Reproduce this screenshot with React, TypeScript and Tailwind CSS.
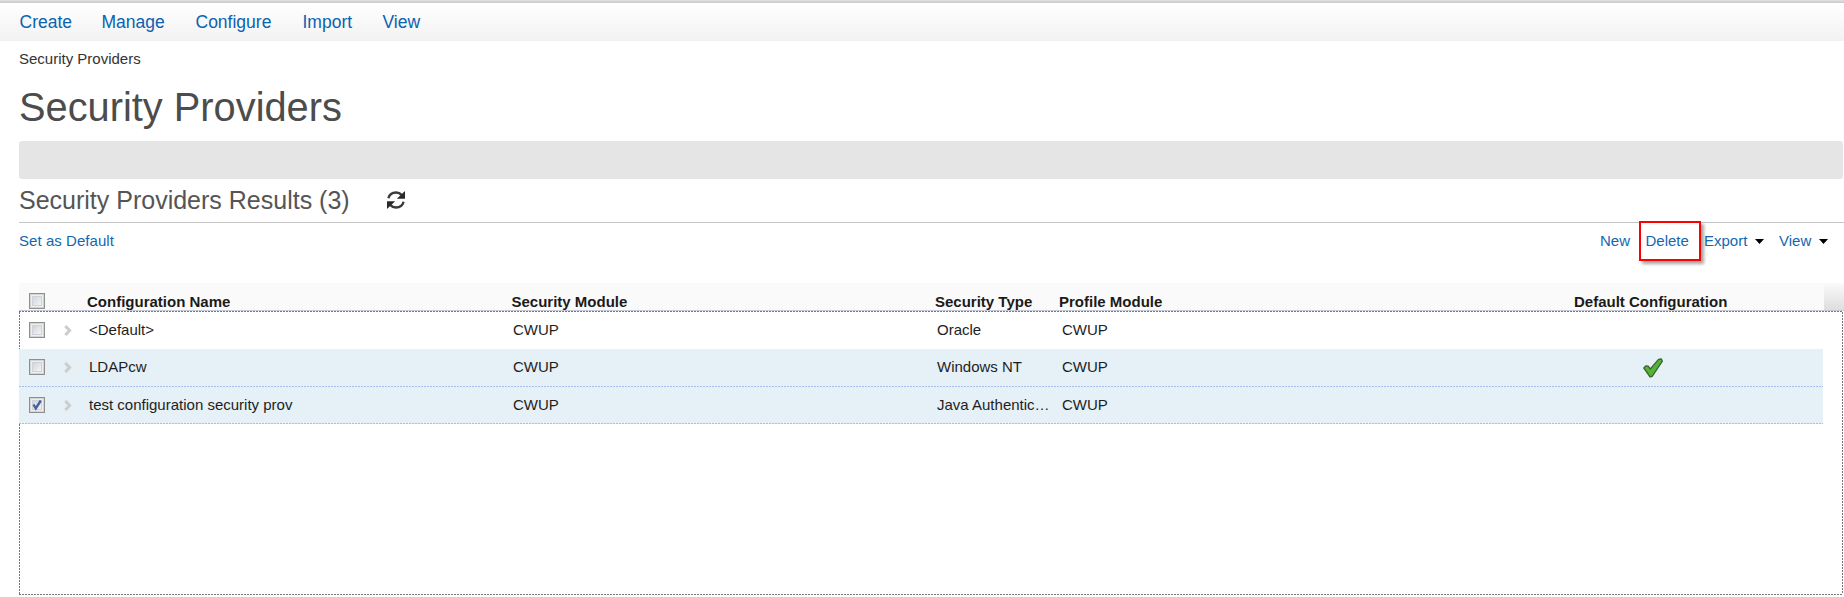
import React from "react";

const nav = [
  { label: "Create", cls: "w-[82px]" },
  { label: "Manage", cls: "w-[94px]" },
  { label: "Configure", cls: "w-[107px]" },
  { label: "Import", cls: "w-[80px]" },
  { label: "View", cls: "" },
];

const rows = [
  { name: "<Default>", type: "Oracle", checked: false, isDefault: false, cls: "h-[37px]", line: false },
  { name: "LDAPcw", type: "Windows NT", checked: false, isDefault: true, cls: "h-[37px] bg-[#e5f0f7]", line: true },
  { name: "test configuration security prov", type: "Java Authentic…", checked: true, isDefault: false, cls: "h-[36px] bg-[#e5f0f7]", line: true },
];

const grid = "grid grid-cols-[68px_424px_424px_125px_534px_1fr]";
const dashH = "h-px shrink-0 bg-[repeating-linear-gradient(90deg,#777_0_2px,#fff_2px_3px)]";
const dashV = "w-px shrink-0 bg-[repeating-linear-gradient(180deg,#777_0_2px,#fff_2px_3px)]";
const rowLine = "h-px w-[1804px] shrink-0 bg-[repeating-linear-gradient(90deg,#a9bdea_0_2px,#e5f0f7_2px_3px)]";

function Checkbox({ checked }: { checked?: boolean }) {
  return (
    <svg width="16" height="16" viewBox="0 0 16 16" className="block shrink-0">
      <defs>
        <linearGradient id="boxFill" x1="0" y1="0" x2="1" y2="1">
          <stop offset="0" stopColor="#ced2da" />
          <stop offset="1" stopColor="#f6f6f6" />
        </linearGradient>
      </defs>
      <rect x="0.5" y="0.5" width="15" height="15" fill="#eeeeee" stroke="#8e8f8f" />
      <rect x="1.5" y="1.5" width="13" height="13" fill="none" stroke="#c9c9c9" strokeOpacity="0.7" />
      <rect x="3.5" y="3.5" width="9" height="9" fill="url(#boxFill)" stroke="#cfd2d9" />
      {checked && <path d="M4.5 7.5 6.8 11.5 11.8 3.5" fill="none" stroke="#4a5f9f" strokeWidth="2.4" />}
    </svg>
  );
}

function Chevron() {
  return (
    <svg width="8" height="11" viewBox="0 0 8 11" className="block">
      <path d="M1.3 1 5.6 5.5 1.3 10" fill="none" stroke="#cdcdcd" strokeWidth="3" />
    </svg>
  );
}

function Refresh() {
  return (
    <svg width="18" height="18" viewBox="0 0 18 18" className="block">
      <path d="M1.4 7.2C2.4 3.4 5.6 1.5 9 1.5c2.6 0 4.4 1 5.8 2.6" fill="none" stroke="#3a3a3a" strokeWidth="2.4" />
      <path d="M18 0v7.8H9.8Z" fill="#2a2a2a" />
      <path d="M16.6 10.8C15.6 14.6 12.4 16.5 9 16.5c-2.6 0-4.4-1-5.8-2.6" fill="none" stroke="#3a3a3a" strokeWidth="2.4" />
      <path d="M0 18v-7.8H8.2Z" fill="#2a2a2a" />
    </svg>
  );
}

function Caret() {
  return (
    <svg width="9" height="5" viewBox="0 0 9 5" className="block">
      <path d="M0 0H9L4.5 5Z" fill="#000" />
    </svg>
  );
}

function GreenCheck() {
  return (
    <svg width="20" height="20" viewBox="0 0 20 20" className="block">
      <path d="M.8 10 3 7.8 5.2 8.2 7.3 11 15.5 1.4 18.4 1 19.4 3.2 9.2 18.4 7.2 19Z" fill="#55b335" stroke="#3d6631" strokeWidth="1.3" strokeLinejoin="round" />
    </svg>
  );
}

export default function App() {
  return (
    <div className="h-[597px] w-[1844px] overflow-hidden bg-white font-['Liberation_Sans',Arial,sans-serif] text-[15px] leading-[18px] text-[#1e1e1e]">
      <div className="h-[3px] bg-linear-to-b from-[#e2e2e2] to-[#c8c8c8]" />
      <nav className="flex h-[38px] bg-linear-to-b from-white to-[#f2f2f2] pt-[8px] pl-[19.5px] text-[17.5px] leading-[22px] text-[#0b62b0]">
        {nav.map((n) => (
          <a key={n.label} className={n.cls}>{n.label}</a>
        ))}
      </nav>
      <main className="pl-[19px]">
        <div className="h-[39px] pt-[9px] text-[#333]">Security Providers</div>
        <h1 className="h-[61px] pt-[4px] text-[39.8px] leading-[46px] text-[#4c4c4c]">Security Providers</h1>
        <div className="h-[38px] w-[1824px] rounded-[3px] bg-[#e5e5e5]" />
        <div className="flex h-[43px] items-start pt-[7px] text-[25px] leading-[28px] text-[#555]">
          <h2 className="w-[368px]">Security Providers Results (3)</h2>
          <span className="pt-[5px]"><Refresh /></span>
        </div>
        <div className="h-px bg-[#c6c6c6]" />
        <div className="flex h-[60px] items-start text-[#1267b1]">
          <a className="mt-[9px] tracking-[0.05px]">Set as Default</a>
          <a className="mt-[9px] ml-auto">New</a>
          <span className="-mt-[2px] ml-[9px] h-[40px] w-[62px] border-2 border-[#ff0000] pt-[9px] pl-[4.5px] shadow-[3px_3px_3px_rgba(0,0,0,0.35)]">Delete</span>
          <a className="mt-[9px] ml-[3px] flex w-[75px] items-center">Export<span className="ml-[8px]"><Caret /></span></a>
          <a className="mt-[9px] flex w-[65px] items-center">View<span className="ml-[8px]"><Caret /></span></a>
        </div>
        <div className="flex h-[28px]">
          <div className={`${grid} w-[1805px] border-b border-[#c5c9da] bg-[#fafafa] font-bold text-[#1a1a1a]`}>
            <div className="pt-[10px] pl-[10px]"><Checkbox /></div>
            <div className="pt-[10px]">Configuration Name</div>
            <div className="pt-[10px] pl-[0.5px]">Security Module</div>
            <div className="pt-[10px]">Security Type</div>
            <div className="-ml-px pt-[10px]">Profile Module</div>
            <div className="-ml-[20px] pt-[10px]">Default Configuration</div>
          </div>
          <div className="flex-1 border-b border-[#c5c9da] bg-linear-to-b from-[#fafafa] to-[#dedede]" />
        </div>
        <div className={`${dashH} w-[1824px]`} />
        <div className="flex h-[282px] w-[1824px]">
          <div className="flex flex-1 flex-col">
            {rows.map((r) => (
              <div key={r.name}>
                <div className="flex">
                  {!r.line && <div className={dashV} />}
                  <div className={`${grid} ${r.cls} ${r.line ? "w-[1804px]" : "-ml-px w-[1804px]"}`}>
                    <div className="flex items-start pt-[10px] pl-[10px]">
                      <Checkbox checked={r.checked} />
                      <span className="mt-[3px] ml-[18.5px]"><Chevron /></span>
                    </div>
                    <div className="pt-[9px] pl-[2px]">{r.name}</div>
                    <div className="pt-[9px] pl-[2px]">CWUP</div>
                    <div className="pt-[9px] pl-[2px] whitespace-nowrap">{r.type}</div>
                    <div className="pt-[9px] pl-[2px]">CWUP</div>
                    <div className="pt-[9px] pl-[49px]">{r.isDefault && <GreenCheck />}</div>
                  </div>
                </div>
                {r.line && <div className={rowLine} />}
              </div>
            ))}
            <div className="flex flex-1">
              <div className={dashV} />
            </div>
          </div>
          <div className={dashV} />
        </div>
        <div className={`${dashH} w-[1824px]`} />
      </main>
    </div>
  );
}
